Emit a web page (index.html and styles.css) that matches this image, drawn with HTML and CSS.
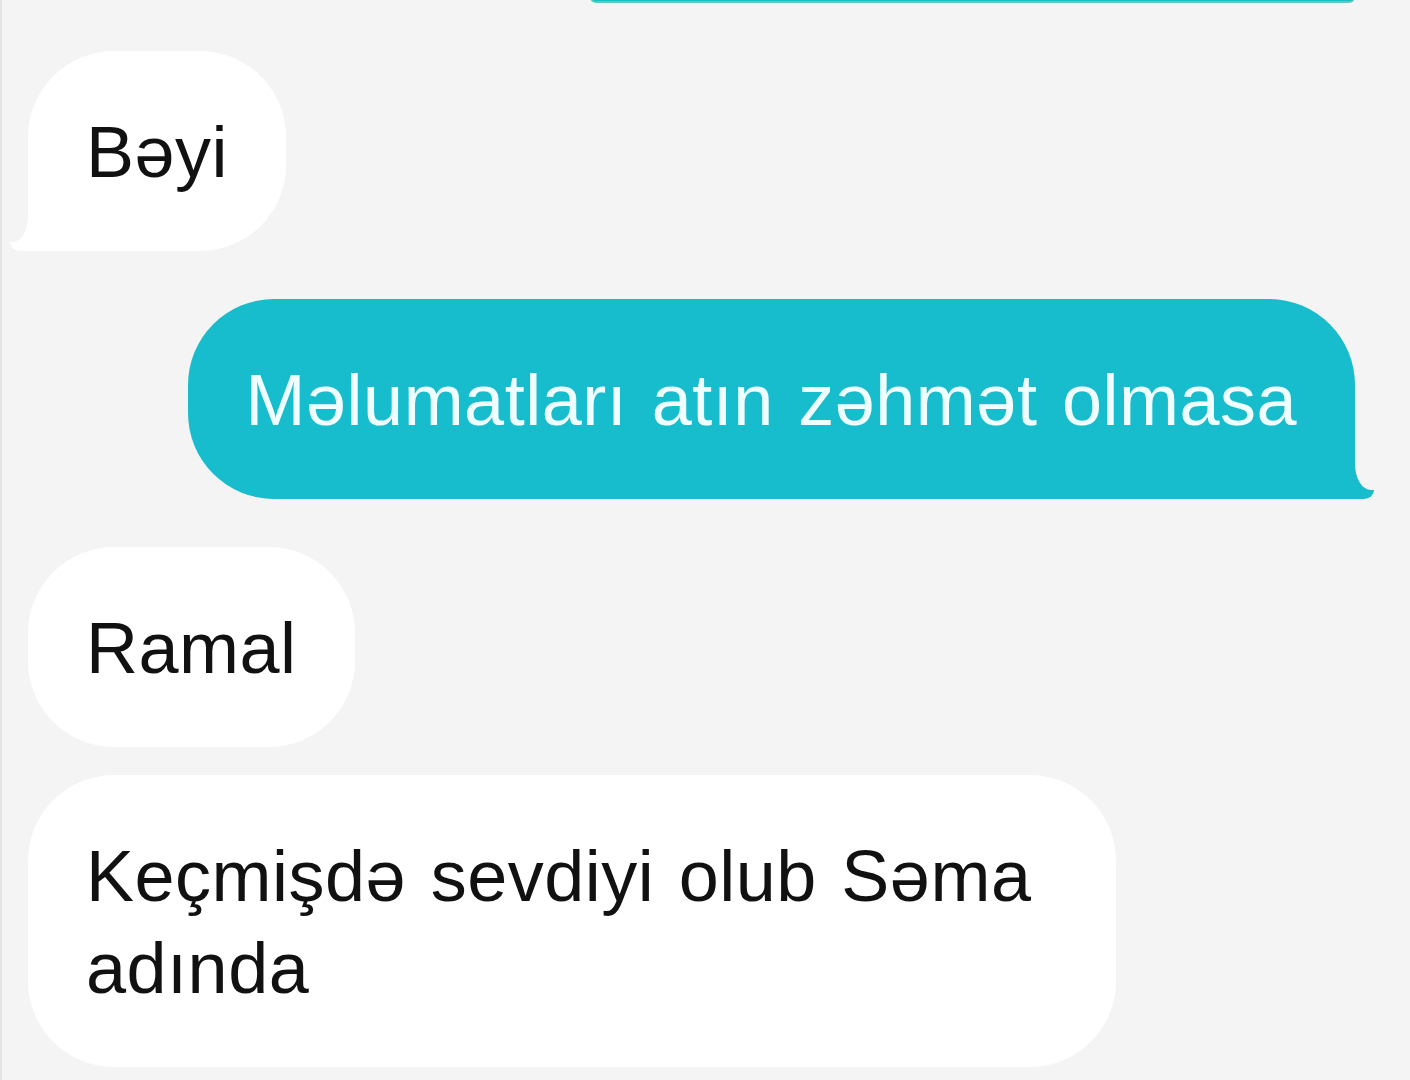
FILE: index.html
```html
<!DOCTYPE html>
<html lang="az">
<head>
    <meta charset="UTF-8">
    <meta name="viewport" content="width=device-width, initial-scale=1.0">
    <title>Mesajlar</title>
    <link rel="stylesheet" href="styles.css">
</head>
<body>
    <div class="thread">
        <div class="msg out clipped">&nbsp;</div>

        <div class="msg in tail">Bəyi</div>

        <div class="msg out tail">Məlumatları atın zəhmət olmasa</div>

        <div class="msg in">Ramal</div>
        <div class="msg in next">Keçmişdə sevdiyi olub Səma adında</div>
    </div>
</body>
</html>
```

FILE: styles.css
```css
* {
    padding: 0;
    margin: 0;
    box-sizing: border-box;
}

body {
    background-color: #f4f4f4;
    border-left: 2px solid #e4e4e4;
    height: 1080px;
    overflow: hidden;
    font-family: "Liberation Sans", Arial, sans-serif;
}

.thread {
    display: flex;
    flex-direction: column;
    align-items: flex-start;
    padding: 0 55px 0 26px;
}

.msg {
    position: relative;
    max-width: 1088px;
    padding: 55px 58px 53px;
    border-radius: 86px;
    font-size: 72px;
    line-height: 92px;
    letter-spacing: 0.5px;
    word-spacing: 4px;
    color: #111;
    background-color: #fff;
}

.msg.in {
    margin-top: 48px;
}
.msg.in.next {
    margin-top: 28px;
}

.msg.out {
    align-self: flex-end;
    max-width: none;
    margin-top: 48px;
    color: #effefe;
    background-color: #17bdcc;
}

/* bubble that scrolled above the top edge */
.msg.out.clipped {
    width: 765px;
    height: 200px;
    margin-top: -197px;
    border-radius: 86px 86px 6px 6px;
    border-bottom: 2px solid #5fc9bd;
}

/* tail on the last bubble of a group */
.msg.tail::before,
.msg.tail::after {
    content: "";
    position: absolute;
}
.msg.tail::before {
    bottom: 0;
    width: 40px;
    height: 38px;
}
.msg.tail::after {
    bottom: 9px;
    width: 26px;
    height: 40px;
    background-color: #f4f4f4;
}

.msg.out.tail {
    border-bottom-right-radius: 0;
}
.msg.out.tail::before {
    right: -19px;
    background-color: #17bdcc;
    border-bottom-right-radius: 10px 9px;
}
.msg.out.tail::after {
    right: -26px;
    border-bottom-left-radius: 16px 26px;
}

.msg.in.tail {
    border-bottom-left-radius: 0;
}
.msg.in.tail::before {
    left: -18px;
    background-color: #fff;
    border-bottom-left-radius: 10px 9px;
}
.msg.in.tail::after {
    left: -26px;
    border-bottom-right-radius: 15px 26px;
}
```
